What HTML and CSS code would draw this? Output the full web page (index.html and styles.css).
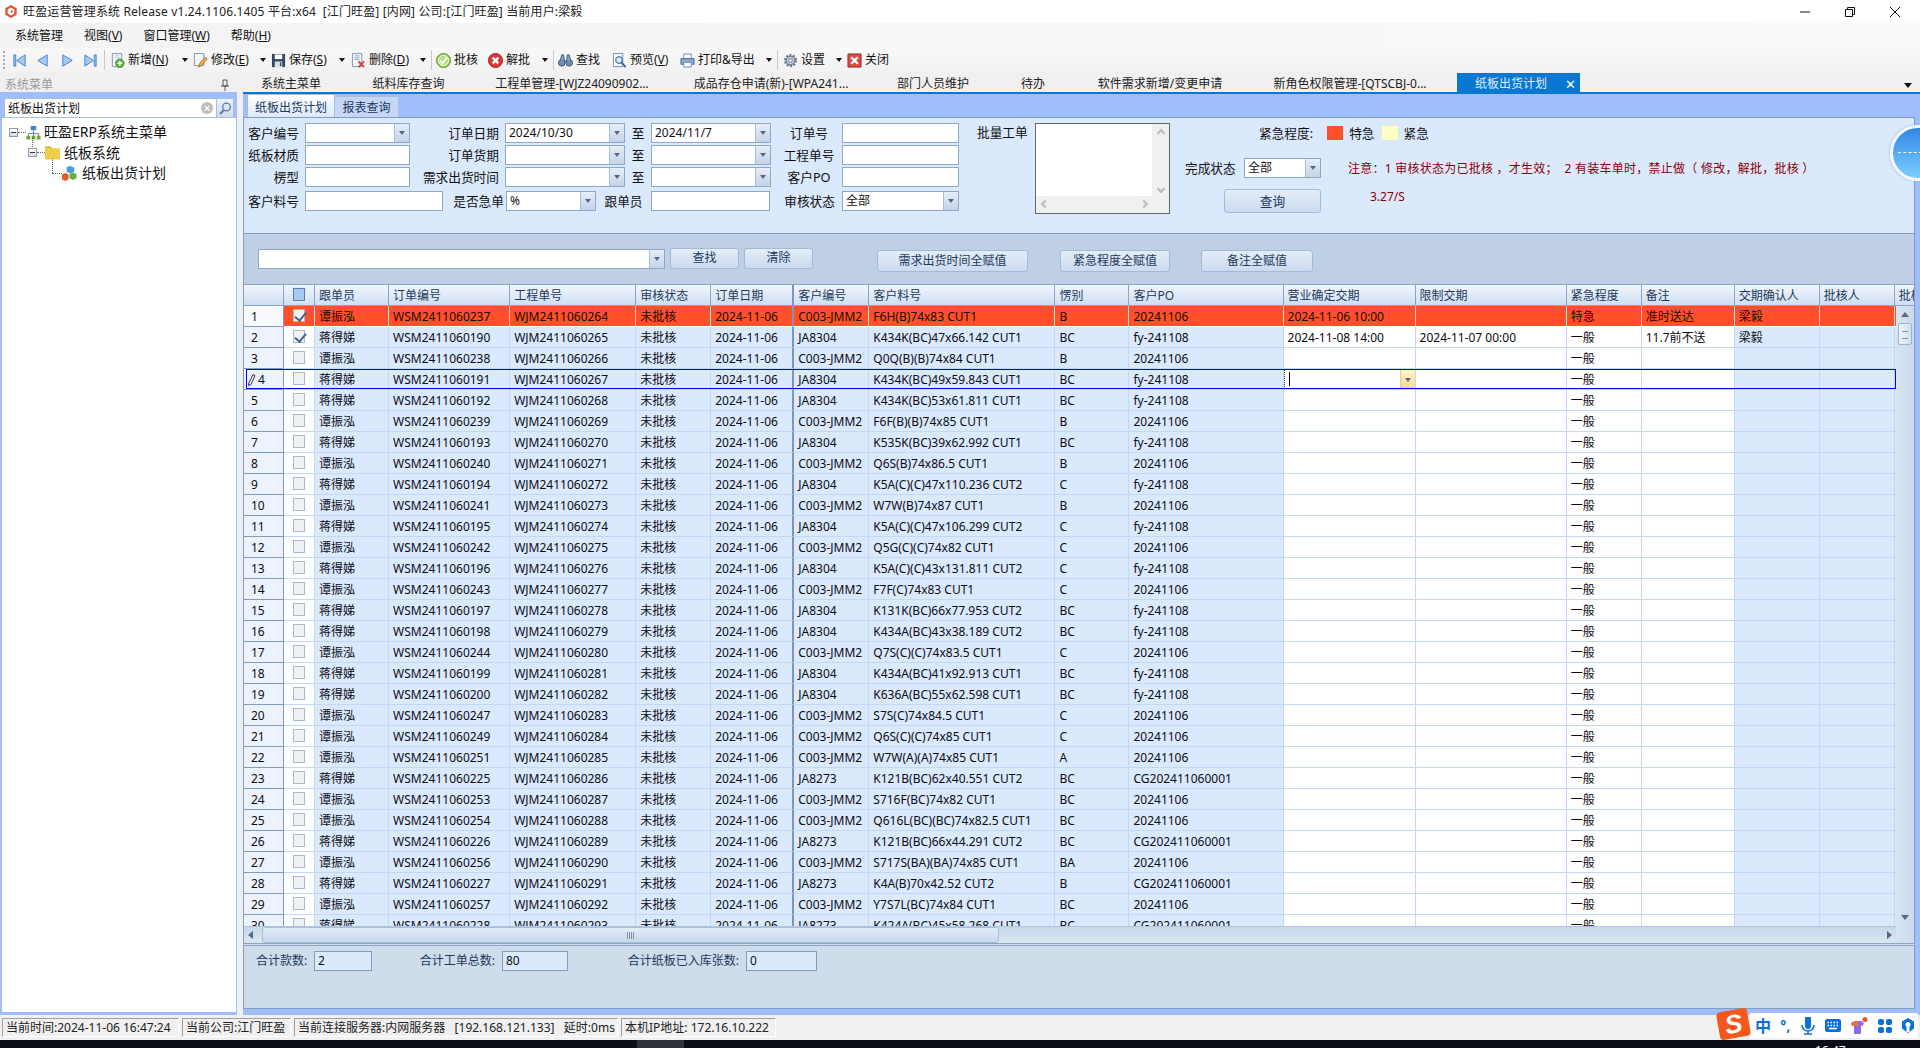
FILE: index.html
```html
<!DOCTYPE html>
<html lang="zh-CN">
<head>
  <meta charset="UTF-8" />
  <title>旺盈运营管理系统</title>
  <link rel="stylesheet" href="styles.css">
</head>
<body>
  <!-- Icon sprite -->
  <svg class="sprite" xmlns="http://www.w3.org/2000/svg">
    <symbol id="i-first" viewBox="0 0 16 16"><path d="M2 2h2v12H2zM14 2v12L5 8z" fill="#a9c8f2" stroke="#3d7fd2"/></symbol>
    <symbol id="i-prev" viewBox="0 0 16 16"><path d="M13 2v12L3 8z" fill="#a9c8f2" stroke="#3d7fd2"/></symbol>
    <symbol id="i-next" viewBox="0 0 16 16"><path d="M3 2v12l10-6z" fill="#a9c8f2" stroke="#3d7fd2"/></symbol>
    <symbol id="i-last" viewBox="0 0 16 16"><path d="M12 2h2v12h-2zM2 2v12l9-6z" fill="#a9c8f2" stroke="#3d7fd2"/></symbol>
    <symbol id="i-add" viewBox="0 0 16 16"><path d="M2.500.5h10v14h-10z" fill="#f4f7fb" stroke="#7b93b3"/><path d="M5 3h5M5 5h5" stroke="#b7c6da"/><circle cx="10.500" cy="11" r="4.500" fill="#63b548" stroke="#3c8a2c"/><path d="M8 11h5M10.500 8.500v5" stroke="#fff" stroke-width="1.500"/></symbol>
    <symbol id="i-edit" viewBox="0 0 16 16"><path d="M1.500.5h10v13h-10z" fill="#f4f7fb" stroke="#7b93b3"/><path d="M6 15l1-3.500 6-7 2 2-6 7z" fill="#efb13f" stroke="#a46f14"/></symbol>
    <symbol id="i-save" viewBox="0 0 16 16"><path d="M1 1h14v14H1z" fill="#33475f"/><path d="M4 1.500h8v5H4z" fill="#fff"/><path d="M4 9h8v6H4z" fill="#d9e1ea"/><path d="M9.500 10h1.500v4H9.500z" fill="#33475f"/></symbol>
    <symbol id="i-del" viewBox="0 0 16 16"><path d="M1.500.5h10v14h-10z" fill="#f4f7fb" stroke="#7b93b3"/><path d="M4 3h5M4 5h5M4 7h5" stroke="#8ea3bf"/><path d="M8 9l6 6M14 9l-6 6" stroke="#d8413c" stroke-width="2"/></symbol>
    <symbol id="i-ok" viewBox="0 0 16 16"><circle cx="8" cy="8" r="7.500" fill="#8fc850" stroke="#5f9a2c"/><circle cx="8" cy="8" r="5.500" fill="#b8dd85" stroke="#fff"/><path d="M4.500 8l2.500 3 4.500-6" fill="none" stroke="#fff" stroke-width="2"/></symbol>
    <symbol id="i-no" viewBox="0 0 16 16"><circle cx="8" cy="8" r="7.500" fill="#d63a37" stroke="#a91f1e"/><path d="M5 5l6 6M11 5l-6 6" stroke="#fff" stroke-width="2.500"/></symbol>
    <symbol id="i-find" viewBox="0 0 16 16"><circle cx="4" cy="10.500" r="3.500" fill="#6f8eb3" stroke="#3c5576"/><circle cx="12" cy="10.500" r="3.500" fill="#6f8eb3" stroke="#3c5576"/><path d="M2.500 8l1.500-6h2l1 7h2l1-7h2l1.500 6" fill="#8ea6c4" stroke="#3c5576"/></symbol>
    <symbol id="i-view" viewBox="0 0 16 16"><path d="M1.500.5h10v14h-10z" fill="#f4f7fb" stroke="#6e8fb8"/><circle cx="7.500" cy="7.500" r="3.500" fill="#d7e7fa" stroke="#36699f" stroke-width="1.200"/><path d="M10 10l4.500 5" stroke="#36699f" stroke-width="2"/></symbol>
    <symbol id="i-print" viewBox="0 0 16 16"><path d="M4 1h8v5H4z" fill="#fff" stroke="#6e8fb8"/><path d="M1 6h14v6H1z" fill="#8ea8c8" stroke="#4e6c92"/><path d="M4 10h8v5H4z" fill="#fff" stroke="#6e8fb8"/></symbol>
    <symbol id="i-gear" viewBox="0 0 16 16"><circle cx="8" cy="8" r="5.500" fill="#a9b4c2" stroke="#6b7889" stroke-width="3" stroke-dasharray="2 1.450"/><circle cx="8" cy="8" r="4.500" fill="#c3ccd7" stroke="#6b7889"/><circle cx="8" cy="8" r="2" fill="#f0f0f0" stroke="#6b7889"/></symbol>
    <symbol id="i-close" viewBox="0 0 16 16"><path d="M1 1h14v14H1z" fill="#d64a48" stroke="#a32524"/><path d="M4.500 4.500l7 7M11.500 4.500l-7 7" stroke="#fff" stroke-width="2.500"/></symbol>
    <symbol id="i-logo" viewBox="0 0 16 16"><path d="M8 .5l6.500 3.700v7.600L8 15.500l-6.500-3.700V4.200z" fill="#e0532f"/><path d="M8 3.500l3.800 2.200v4.600L8 12.500l-3.800-2.200V5.700z" fill="#fff"/><path d="M8 6l2 1.200v1.600L8 10z" fill="#e0532f"/></symbol>
    <symbol id="i-net" viewBox="0 0 16 16"><path d="M8 5v4M2.500 12V9h11v3M8 9v3" fill="none" stroke="#5f7fa0"/><path d="M5 1h6v4.500H5z" fill="#4c86c8"/><path d="M.5 11.500h4v4h-4zM6 11.500h4v4H6zM11.500 11.500h4v4h-4z" fill="#79a33c"/></symbol>
    <symbol id="i-folder" viewBox="0 0 16 16"><path d="M0 1.500h6l1.500 2H16v12H0z" fill="#f0cd4d"/><path d="M0 1.500h6l1.500 2H0z" fill="#e3b93a"/></symbol>
    <symbol id="i-cubes" viewBox="0 0 16 16"><path d="M5 1l4-1 4 1.500v5L9 8 5 6.500z" fill="#4a9fd8"/><path d="M0 9l3.500-1.500L7 9v5l-3.500 2L0 14z" fill="#e35a2c"/><path d="M8 8.500l3.500-1.500L15.500 8.500v4.500L11.500 15 8 13z" fill="#62b33f"/></symbol>
  </svg>

  <!-- Window title -->
  <header class="titlebar">
    <svg class="logo"><use href="#i-logo"/></svg>
    <span class="title-text">旺盈运营管理系统 Release v1.24.1106.1405 平台:x64  [江门旺盈] [内网] 公司:[江门旺盈] 当前用户:梁毅</span>
    <div class="win-buttons">
      <svg width="12" height="12" viewBox="0 0 12 12"><path d="M1 6h10" stroke="#111"/></svg>
      <svg width="12" height="12" viewBox="0 0 12 12"><path d="M1.500 3.500h7v7h-7zM3.500 3.500v-2h7v7h-2" fill="none" stroke="#111"/></svg>
      <svg width="12" height="12" viewBox="0 0 12 12"><path d="M1 1l10 10M11 1L1 11" stroke="#111"/></svg>
    </div>
  </header>

  <nav class="menubar">
    <span>系统管理</span>
    <span>视图(<u>V</u>)</span>
    <span>窗口管理(<u>W</u>)</span>
    <span>帮助(<u>H</u>)</span>
  </nav>

  <div class="toolbar">
    <span class="tb"><svg class="ico"><use href="#i-first"/></svg></span>
    <span class="tb"><svg class="ico"><use href="#i-prev"/></svg></span>
    <span class="tb"><svg class="ico"><use href="#i-next"/></svg></span>
    <span class="tb"><svg class="ico"><use href="#i-last"/></svg></span>
    <span class="tb-sep"></span>
    <span class="tb"><svg class="ico"><use href="#i-add"/></svg><span>新增(<u>N</u>)</span></span>
    <span class="tb-arrow"></span>
    <span class="tb"><svg class="ico"><use href="#i-edit"/></svg><span>修改(<u>E</u>)</span></span>
    <span class="tb-arrow"></span>
    <span class="tb"><svg class="ico"><use href="#i-save"/></svg><span>保存(<u>S</u>)</span></span>
    <span class="tb-arrow"></span>
    <span class="tb"><svg class="ico"><use href="#i-del"/></svg><span>删除(<u>D</u>)</span></span>
    <span class="tb-arrow"></span>
    <span class="tb-sep"></span>
    <span class="tb"><svg class="ico"><use href="#i-ok"/></svg><span>批核</span></span>
    <span class="tb"><svg class="ico"><use href="#i-no"/></svg><span>解批</span></span>
    <span class="tb-arrow"></span>
    <span class="tb-sep"></span>
    <span class="tb"><svg class="ico"><use href="#i-find"/></svg><span>查找</span></span>
    <span class="tb"><svg class="ico"><use href="#i-view"/></svg><span>预览(<u>V</u>)</span></span>
    <span class="tb"><svg class="ico"><use href="#i-print"/></svg><span>打印&amp;导出</span></span>
    <span class="tb-arrow"></span>
    <span class="tb-sep"></span>
    <span class="tb"><svg class="ico"><use href="#i-gear"/></svg><span>设置</span></span>
    <span class="tb-arrow"></span>
    <span class="tb"><svg class="ico"><use href="#i-close"/></svg><span>关闭</span></span>
  </div>

  <div class="workspace">
    <!-- Left menu panel -->
    <aside class="sidebar">
      <div class="side-head">
        <span class="side-title">系统菜单</span>
        <span class="side-dots"></span>
        <svg class="side-pin" width="10" height="12" viewBox="0 0 10 12"><path d="M3 1h4v6H3zM1 7h8M5 7v5" fill="none" stroke="#555"/></svg>
      </div>
      <div class="side-body">
        <div class="side-search">
          <span class="side-input">纸板出货计划</span>
          <span class="side-clear">×</span>
          <span class="side-go"><svg width="13" height="13" viewBox="0 0 13 13"><circle cx="7.500" cy="5" r="3.800" fill="none" stroke="#5d7ca3" stroke-width="1.300"/><path d="M5 8l-4 4" stroke="#5d7ca3" stroke-width="2"/></svg></span>
        </div>
        <div class="tree">
          <div class="node lvl0"><i class="exp"></i><i class="dots"></i><svg class="ico"><use href="#i-net"/></svg><span>旺盈ERP系统主菜单</span></div>
          <div class="node lvl1"><i class="exp"></i><i class="dots"></i><svg class="ico"><use href="#i-folder"/></svg><span>纸板系统</span></div>
          <div class="node lvl2"><i class="dots"></i><svg class="ico"><use href="#i-cubes"/></svg><span>纸板出货计划</span></div>
        </div>
      </div>
    </aside>

    <main class="main">
      <!-- Document tabs -->
      <div class="doc-tabs">
        <span class="doc-tab">系统主菜单</span>
        <span class="doc-tab">纸料库存查询</span>
        <span class="doc-tab">工程单管理-[WJZ24090902...</span>
        <span class="doc-tab">成品存仓申请(新)-[WPA241...</span>
        <span class="doc-tab">部门人员维护</span>
        <span class="doc-tab">待办</span>
        <span class="doc-tab">软件需求新增/变更申请</span>
        <span class="doc-tab">新角色权限管理-[QTSCBJ-0...</span>
        <span class="doc-tab gap"></span>
        <span class="doc-tab active">纸板出货计划<b>✕</b></span>
        <span class="doc-tab more"><i></i></span>
      </div>

      <div class="sub-tabs">
        <span class="sub-tab active">纸板出货计划</span>
        <span class="sub-tab">报表查询</span>
      </div>

      <!-- Query form -->
      <section class="form">
        <div class="form-left">
          <div class="form-grid">
            <label>客户编号</label><span class="combo"><em></em><i></i></span>
            <label>订单日期</label><span class="combo"><em>2024/10/30</em><i></i></span>
            <label class="to">至</label><span class="combo"><em>2024/11/7</em><i></i></span>
            <label class="mid">订单号</label><span class="text-in"></span>

            <label>纸板材质</label><span class="text-in"></span>
            <label>订单货期</label><span class="combo"><em></em><i></i></span>
            <label class="to">至</label><span class="combo"><em></em><i></i></span>
            <label class="mid">工程单号</label><span class="text-in"></span>

            <label>楞型</label><span class="text-in"></span>
            <label>需求出货时间</label><span class="combo"><em></em><i></i></span>
            <label class="to">至</label><span class="combo"><em></em><i></i></span>
            <label class="mid">客户PO</label><span class="text-in"></span>
          </div>
          <div class="form-row4">
            <label>客户料号</label><span class="text-in"></span>
            <label class="tight">是否急单</label><span class="combo"><em>%</em><i></i></span>
            <label class="mid">跟单员</label><span class="text-in"></span>
            <label class="far">审核状态</label><span class="combo"><em>全部</em><i></i></span>
          </div>
        </div>

        <div class="batch">
          <label>批量工单</label>
          <div class="batch-box">
            <div class="batch-text"></div>
            <div class="batch-v"><i class="chev up"></i><i class="chev down"></i></div>
            <div class="batch-h"><i class="chev left"></i><i class="chev right"></i></div>
          </div>
        </div>

        <div class="form-right">
          <div class="legend">
            <span>紧急程度:</span>
            <i class="swatch red"></i><span>特急</span>
            <i class="swatch yellow"></i><span>紧急</span>
          </div>
          <div class="state-row">
            <label>完成状态</label>
            <span class="combo state"><em>全部</em><i></i></span>
            <span class="note">注意：1 审核状态为已批核 ，才生效；  2 有装车单时，禁止做（ 修改，解批，批核 ）</span>
          </div>
          <div class="query-row">
            <button class="btn query">查询</button>
            <span class="note">3.27/S</span>
          </div>
        </div>
      </section>

      <!-- Grid search bar -->
      <section class="filter-bar">
        <span class="combo search"><em></em><i></i></span>
        <button class="btn small">查找</button>
        <button class="btn small">清除</button>
        <button class="btn assign a1">需求出货时间全赋值</button>
        <button class="btn assign a2">紧急程度全赋值</button>
        <button class="btn assign a3">备注全赋值</button>
      </section>

      <section class="grid-wrap">
        <div class="grid-clip">
          <table class="grid">
            <colgroup>
              <col class="c40"><col class="c31"><col class="c74"><col class="c121"><col class="c126"><col class="c75"><col class="c83"><col class="c75"><col class="c186"><col class="c74"><col class="c154"><col class="c132"><col class="c151"><col class="c75"><col class="c93"><col class="c85"><col class="c75"><col class="c21">
            </colgroup>
            <thead>
              <tr><th></th><th><i class="chk head"></i></th><th>跟单员</th><th>订单编号</th><th>工程单号</th><th>审核状态</th><th>订单日期</th><th>客户编号</th><th>客户料号</th><th>愣别</th><th>客户PO</th><th>营业确定交期</th><th>限制交期</th><th>紧急程度</th><th>备注</th><th>交期确认人</th><th>批核人</th><th>批核时间</th></tr>
            </thead>
            <tbody>
              <tr class="urgent"><td>1</td><td><i class="chk on"></i></td><td>谭振泓</td><td>WSM2411060237</td><td>WJM2411060264</td><td>未批核</td><td>2024-11-06</td><td>C003-JMM2</td><td>F6H(B)74x83 CUT1</td><td>B</td><td>20241106</td><td>2024-11-06 10:00</td><td></td><td>特急</td><td>准时送达</td><td>梁毅</td><td></td><td></td></tr>
              <tr><td>2</td><td><i class="chk on"></i></td><td>蒋得娣</td><td>WSM2411060190</td><td>WJM2411060265</td><td>未批核</td><td>2024-11-06</td><td>JA8304</td><td>K434K(BC)47x66.142 CUT1</td><td>BC</td><td>fy-241108</td><td>2024-11-08 14:00</td><td>2024-11-07 00:00</td><td>一般</td><td>11.7前不送</td><td>梁毅</td><td></td><td></td></tr>
              <tr><td>3</td><td><i class="chk"></i></td><td>谭振泓</td><td>WSM2411060238</td><td>WJM2411060266</td><td>未批核</td><td>2024-11-06</td><td>C003-JMM2</td><td>Q0Q(B)(B)74x84 CUT1</td><td>B</td><td>20241106</td><td></td><td></td><td>一般</td><td></td><td></td><td></td><td></td></tr>
              <tr><td class="editing"><svg width="8" height="12" viewBox="0 0 8 12"><path d="M5 .5l2 1-4 9-2.500 1 .3-2.500z" fill="none" stroke="#333"/></svg>4</td><td><i class="chk"></i></td><td>蒋得娣</td><td>WSM2411060191</td><td>WJM2411060267</td><td>未批核</td><td>2024-11-06</td><td>JA8304</td><td>K434K(BC)49x59.843 CUT1</td><td>BC</td><td>fy-241108</td><td class="edit-cell"><div><span class="caret"></span><span class="cell-drop"><i></i></span></div></td><td></td><td>一般</td><td></td><td></td><td></td><td></td></tr>
              <tr><td>5</td><td><i class="chk"></i></td><td>蒋得娣</td><td>WSM2411060192</td><td>WJM2411060268</td><td>未批核</td><td>2024-11-06</td><td>JA8304</td><td>K434K(BC)53x61.811 CUT1</td><td>BC</td><td>fy-241108</td><td></td><td></td><td>一般</td><td></td><td></td><td></td><td></td></tr>
              <tr><td>6</td><td><i class="chk"></i></td><td>谭振泓</td><td>WSM2411060239</td><td>WJM2411060269</td><td>未批核</td><td>2024-11-06</td><td>C003-JMM2</td><td>F6F(B)(B)74x85 CUT1</td><td>B</td><td>20241106</td><td></td><td></td><td>一般</td><td></td><td></td><td></td><td></td></tr>
              <tr><td>7</td><td><i class="chk"></i></td><td>蒋得娣</td><td>WSM2411060193</td><td>WJM2411060270</td><td>未批核</td><td>2024-11-06</td><td>JA8304</td><td>K535K(BC)39x62.992 CUT1</td><td>BC</td><td>fy-241108</td><td></td><td></td><td>一般</td><td></td><td></td><td></td><td></td></tr>
              <tr><td>8</td><td><i class="chk"></i></td><td>谭振泓</td><td>WSM2411060240</td><td>WJM2411060271</td><td>未批核</td><td>2024-11-06</td><td>C003-JMM2</td><td>Q6S(B)74x86.5 CUT1</td><td>B</td><td>20241106</td><td></td><td></td><td>一般</td><td></td><td></td><td></td><td></td></tr>
              <tr><td>9</td><td><i class="chk"></i></td><td>蒋得娣</td><td>WSM2411060194</td><td>WJM2411060272</td><td>未批核</td><td>2024-11-06</td><td>JA8304</td><td>K5A(C)(C)47x110.236 CUT2</td><td>C</td><td>fy-241108</td><td></td><td></td><td>一般</td><td></td><td></td><td></td><td></td></tr>
              <tr><td>10</td><td><i class="chk"></i></td><td>谭振泓</td><td>WSM2411060241</td><td>WJM2411060273</td><td>未批核</td><td>2024-11-06</td><td>C003-JMM2</td><td>W7W(B)74x87 CUT1</td><td>B</td><td>20241106</td><td></td><td></td><td>一般</td><td></td><td></td><td></td><td></td></tr>
              <tr><td>11</td><td><i class="chk"></i></td><td>蒋得娣</td><td>WSM2411060195</td><td>WJM2411060274</td><td>未批核</td><td>2024-11-06</td><td>JA8304</td><td>K5A(C)(C)47x106.299 CUT2</td><td>C</td><td>fy-241108</td><td></td><td></td><td>一般</td><td></td><td></td><td></td><td></td></tr>
              <tr><td>12</td><td><i class="chk"></i></td><td>谭振泓</td><td>WSM2411060242</td><td>WJM2411060275</td><td>未批核</td><td>2024-11-06</td><td>C003-JMM2</td><td>Q5G(C)(C)74x82 CUT1</td><td>C</td><td>20241106</td><td></td><td></td><td>一般</td><td></td><td></td><td></td><td></td></tr>
              <tr><td>13</td><td><i class="chk"></i></td><td>蒋得娣</td><td>WSM2411060196</td><td>WJM2411060276</td><td>未批核</td><td>2024-11-06</td><td>JA8304</td><td>K5A(C)(C)43x131.811 CUT2</td><td>C</td><td>fy-241108</td><td></td><td></td><td>一般</td><td></td><td></td><td></td><td></td></tr>
              <tr><td>14</td><td><i class="chk"></i></td><td>谭振泓</td><td>WSM2411060243</td><td>WJM2411060277</td><td>未批核</td><td>2024-11-06</td><td>C003-JMM2</td><td>F7F(C)74x83 CUT1</td><td>C</td><td>20241106</td><td></td><td></td><td>一般</td><td></td><td></td><td></td><td></td></tr>
              <tr><td>15</td><td><i class="chk"></i></td><td>蒋得娣</td><td>WSM2411060197</td><td>WJM2411060278</td><td>未批核</td><td>2024-11-06</td><td>JA8304</td><td>K131K(BC)66x77.953 CUT2</td><td>BC</td><td>fy-241108</td><td></td><td></td><td>一般</td><td></td><td></td><td></td><td></td></tr>
              <tr><td>16</td><td><i class="chk"></i></td><td>蒋得娣</td><td>WSM2411060198</td><td>WJM2411060279</td><td>未批核</td><td>2024-11-06</td><td>JA8304</td><td>K434A(BC)43x38.189 CUT2</td><td>BC</td><td>fy-241108</td><td></td><td></td><td>一般</td><td></td><td></td><td></td><td></td></tr>
              <tr><td>17</td><td><i class="chk"></i></td><td>谭振泓</td><td>WSM2411060244</td><td>WJM2411060280</td><td>未批核</td><td>2024-11-06</td><td>C003-JMM2</td><td>Q7S(C)(C)74x83.5 CUT1</td><td>C</td><td>20241106</td><td></td><td></td><td>一般</td><td></td><td></td><td></td><td></td></tr>
              <tr><td>18</td><td><i class="chk"></i></td><td>蒋得娣</td><td>WSM2411060199</td><td>WJM2411060281</td><td>未批核</td><td>2024-11-06</td><td>JA8304</td><td>K434A(BC)41x92.913 CUT1</td><td>BC</td><td>fy-241108</td><td></td><td></td><td>一般</td><td></td><td></td><td></td><td></td></tr>
              <tr><td>19</td><td><i class="chk"></i></td><td>蒋得娣</td><td>WSM2411060200</td><td>WJM2411060282</td><td>未批核</td><td>2024-11-06</td><td>JA8304</td><td>K636A(BC)55x62.598 CUT1</td><td>BC</td><td>fy-241108</td><td></td><td></td><td>一般</td><td></td><td></td><td></td><td></td></tr>
              <tr><td>20</td><td><i class="chk"></i></td><td>谭振泓</td><td>WSM2411060247</td><td>WJM2411060283</td><td>未批核</td><td>2024-11-06</td><td>C003-JMM2</td><td>S7S(C)74x84.5 CUT1</td><td>C</td><td>20241106</td><td></td><td></td><td>一般</td><td></td><td></td><td></td><td></td></tr>
              <tr><td>21</td><td><i class="chk"></i></td><td>谭振泓</td><td>WSM2411060249</td><td>WJM2411060284</td><td>未批核</td><td>2024-11-06</td><td>C003-JMM2</td><td>Q6S(C)(C)74x85 CUT1</td><td>C</td><td>20241106</td><td></td><td></td><td>一般</td><td></td><td></td><td></td><td></td></tr>
              <tr><td>22</td><td><i class="chk"></i></td><td>谭振泓</td><td>WSM2411060251</td><td>WJM2411060285</td><td>未批核</td><td>2024-11-06</td><td>C003-JMM2</td><td>W7W(A)(A)74x85 CUT1</td><td>A</td><td>20241106</td><td></td><td></td><td>一般</td><td></td><td></td><td></td><td></td></tr>
              <tr><td>23</td><td><i class="chk"></i></td><td>蒋得娣</td><td>WSM2411060225</td><td>WJM2411060286</td><td>未批核</td><td>2024-11-06</td><td>JA8273</td><td>K121B(BC)62x40.551 CUT2</td><td>BC</td><td>CG202411060001</td><td></td><td></td><td>一般</td><td></td><td></td><td></td><td></td></tr>
              <tr><td>24</td><td><i class="chk"></i></td><td>谭振泓</td><td>WSM2411060253</td><td>WJM2411060287</td><td>未批核</td><td>2024-11-06</td><td>C003-JMM2</td><td>S716F(BC)74x82 CUT1</td><td>BC</td><td>20241106</td><td></td><td></td><td>一般</td><td></td><td></td><td></td><td></td></tr>
              <tr><td>25</td><td><i class="chk"></i></td><td>谭振泓</td><td>WSM2411060254</td><td>WJM2411060288</td><td>未批核</td><td>2024-11-06</td><td>C003-JMM2</td><td>Q616L(BC)(BC)74x82.5 CUT1</td><td>BC</td><td>20241106</td><td></td><td></td><td>一般</td><td></td><td></td><td></td><td></td></tr>
              <tr><td>26</td><td><i class="chk"></i></td><td>蒋得娣</td><td>WSM2411060226</td><td>WJM2411060289</td><td>未批核</td><td>2024-11-06</td><td>JA8273</td><td>K121B(BC)66x44.291 CUT2</td><td>BC</td><td>CG202411060001</td><td></td><td></td><td>一般</td><td></td><td></td><td></td><td></td></tr>
              <tr><td>27</td><td><i class="chk"></i></td><td>谭振泓</td><td>WSM2411060256</td><td>WJM2411060290</td><td>未批核</td><td>2024-11-06</td><td>C003-JMM2</td><td>S717S(BA)(BA)74x85 CUT1</td><td>BA</td><td>20241106</td><td></td><td></td><td>一般</td><td></td><td></td><td></td><td></td></tr>
              <tr><td>28</td><td><i class="chk"></i></td><td>蒋得娣</td><td>WSM2411060227</td><td>WJM2411060291</td><td>未批核</td><td>2024-11-06</td><td>JA8273</td><td>K4A(B)70x42.52 CUT2</td><td>B</td><td>CG202411060001</td><td></td><td></td><td>一般</td><td></td><td></td><td></td><td></td></tr>
              <tr><td>29</td><td><i class="chk"></i></td><td>谭振泓</td><td>WSM2411060257</td><td>WJM2411060292</td><td>未批核</td><td>2024-11-06</td><td>C003-JMM2</td><td>Y7S7L(BC)74x84 CUT1</td><td>BC</td><td>20241106</td><td></td><td></td><td>一般</td><td></td><td></td><td></td><td></td></tr>
              <tr><td>30</td><td><i class="chk"></i></td><td>蒋得娣</td><td>WSM2411060228</td><td>WJM2411060293</td><td>未批核</td><td>2024-11-06</td><td>JA8273</td><td>K424A(BC)45x58.268 CUT1</td><td>BC</td><td>CG202411060001</td><td></td><td></td><td>一般</td><td></td><td></td><td></td><td></td></tr>
            </tbody>
          </table>
        </div>
        <div class="focus-row"></div>
        <div class="vscroll"><i class="arrow up"></i><span class="v-thumb"></span><i class="arrow down"></i></div>
        <div class="hscroll"><i class="arrow left"></i><span class="h-thumb"></span><i class="arrow right"></i></div>
      </section>

      <!-- Totals -->
      <section class="summary">
        <label>合计款数:</label><span class="sum-in">2</span>
        <label>合计工单总数:</label><span class="sum-in">80</span>
        <label>合计纸板已入库张数:</label><span class="sum-in">0</span>
      </section>
    </main>
  </div>

  <footer class="statusbar">
    <span class="stat s1">当前时间:2024-11-06 16:47:24</span>
    <span class="stat s2">当前公司:江门旺盈</span>
    <span class="stat s3">当前连接服务器:内网服务器   [192.168.121.133]   延时:0ms</span>
    <span class="stat s4">本机IP地址: 172.16.10.222</span>
  </footer>

  <div class="taskbar"><span class="task-on"></span><span class="clock">16:47</span></div>

  <!-- Floating widgets -->
  <div class="float-ball"></div>
  <div class="ime">
    <span class="ime-logo"><b>S</b></span>
    <span class="ime-zh">中</span>
    <span class="ime-zh punct">°,</span>
    <svg width="16" height="18" viewBox="0 0 16 18"><path d="M5 1.500a3 3 0 0 1 6 0V9a3 3 0 0 1-6 0z" fill="#0a6fd6"/><path d="M2 8a6 6 0 0 0 12 0M8 14v3M4 17h8" fill="none" stroke="#0a6fd6" stroke-width="1.500"/></svg>
    <svg width="16" height="14" viewBox="0 0 16 14"><rect width="16" height="13" rx="2" fill="#0a6fd6"/><path d="M2.500 3.500h1.500M5.500 3.500H7M8.500 3.500H10M11.500 3.500H13M2.500 6.500h1.500M5.500 6.500H7M8.500 6.500H10M11.500 6.500H13M4 9.500h8" stroke="#fff" stroke-width="1.500"/></svg>
    <svg width="18" height="18" viewBox="0 0 18 18"><path d="M1 6l4-2h6l3 2-1.500 3L11 8.500V17H4V8.500L2 9z" fill="#8a6be0"/><path d="M1 6l4-2h3v5H2z" fill="#ee6a50"/><circle cx="15" cy="2.500" r="2.500" fill="#f4512c"/></svg>
    <svg width="14" height="14" viewBox="0 0 14 14"><g fill="#0a6fd6"><rect width="6" height="6" rx="2"/><rect x="8" width="6" height="6" rx="2"/><rect y="8" width="6" height="6" rx="2"/><rect x="8" y="8" width="6" height="6" rx="2"/></g></svg>
    <svg width="14" height="15" viewBox="0 0 14 15"><path d="M7 0l6 3.500v7L7 15l-6-4.500v-7z" fill="#0a6fd6"/><circle cx="7" cy="6.500" r="2.500" fill="#fff"/><path d="M5.500 9h3v5h-3z" fill="#fff"/></svg>
  </div>
</body>
</html>
```

FILE: styles.css
```css
/* Global */
* {
  box-sizing: border-box;
}
html, body {
  margin: 0;
  height: 100%;
}
body {
  width: 1920px;
  height: 1048px;
  display: flex;
  flex-direction: column;
  overflow: hidden;
  position: relative;
  background: #f0f0f0;
  color: #111;
  font: 12px/16px "Noto Sans", "Noto Sans CJK SC", sans-serif;
}
.sprite {
  display: none;
}
.ico {
  width: 15px;
  height: 15px;
  flex: none;
}
label, em {
  font-style: normal;
}

/* Title bar */
.titlebar {
  height: 23px;
  flex: none;
  display: flex;
  align-items: center;
  padding-left: 4px;
  background: #fff;
}
.logo {
  width: 14px;
  height: 15px;
}
.title-text {
  margin-left: 5px;
  white-space: pre;
  letter-spacing: .15px;
  color: #222;
}
.win-buttons {
  margin-left: auto;
  display: flex;
  gap: 33px;
  padding-right: 19px;
}

/* Menu and toolbar */
.menubar {
  height: 25px;
  flex: none;
  display: flex;
  align-items: center;
  gap: 21px;
  padding-left: 15px;
  background: linear-gradient(90deg, #f3f3f3, #fafafa);
}
.toolbar {
  height: 24px;
  flex: none;
  display: grid;
  grid-template-columns: 23px 25px 23px 21px 6px 70px 13px 65px 13px 66px 14px 67px 13px 5px 52px 52px 13px 5px 54px 68px 84px 13px 6px 51px 13px auto;
  align-items: center;
  padding-left: 12px;
  background: linear-gradient(#f8f8f8, #f2f2f2);
  position: relative;
}
.toolbar::before {
  content: "";
  position: absolute;
  left: 3px;
  top: 3px;
  bottom: 3px;
  border-left: 2px dotted #aaa;
}
.tb {
  display: flex;
  align-items: center;
  gap: 3px;
  white-space: nowrap;
}
.tb-sep {
  height: 20px;
  width: 1px;
  background: #c8c8c8;
}
.tb-arrow {
  width: 0;
  height: 0;
  margin-left: 2px;
  border: 3px solid transparent;
  border-top: 4px solid #111;
  border-bottom: 0;
}

/* Workspace */
.workspace {
  height: 943px;
  flex: none;
  display: flex;
  background: #f0f0f0;
}
.sidebar {
  width: 237px;
  flex: none;
  display: flex;
  flex-direction: column;
}
.side-head {
  height: 20px;
  flex: none;
  display: flex;
  align-items: center;
  padding: 5px 6px 0 5px;
}
.side-title {
  color: #999;
}
.side-dots {
  width: 142px;
  height: 6px;
  margin-left: 4px;
  background: radial-gradient(#bbb 35%, transparent 40%) 0 0 / 2px 2px;
}
.side-pin {
  margin-left: auto;
  margin-right: 1px;
}
.side-body {
  flex: 1;
  display: flex;
  flex-direction: column;
  padding: 6px 1px 3px 2px;
  background: #a0bdfd;
}
.side-search {
  height: 20px;
  margin: 0 2px;
  display: flex;
  align-items: center;
  background: #fff;
  border: 1px solid #a9bedb;
}
.side-input {
  flex: 1;
  padding: 2px 0 0 3px;
}
.side-clear {
  width: 12px;
  height: 12px;
  margin-right: 3px;
  border-radius: 50%;
  background: #bcbcbc;
  color: #fff;
  font: bold 11px/12px "Liberation Sans", sans-serif;
  text-align: center;
}
.side-go {
  width: 17px;
  height: 18px;
  display: flex;
  align-items: center;
  justify-content: center;
  background: linear-gradient(#eaf1fb, #cfdcee);
  border-left: 1px solid #a9bedb;
}
.tree {
  flex: 1;
  background: #fff;
  padding-top: 4px;
  font-size: 14px;
}
.node {
  height: 20.500px;
  display: flex;
  align-items: center;
  position: relative;
  white-space: nowrap;
}
.node span {
  margin-left: 4px;
}
.lvl0 { padding-left: 7px; }
.lvl1 { padding-left: 26px; }
.lvl2 { padding-left: 50px; }
.lvl0 span { margin-left: 3px; }
.lvl1 span { margin-left: 4px; }
.lvl2 span { margin-left: 5px; }
.exp {
  width: 9px;
  height: 9px;
  flex: none;
  border: 1px solid #8f9bac;
  background: linear-gradient(#fff, #d5dbe3) ;
  position: relative;
}
.exp::after {
  content: "";
  position: absolute;
  left: 1px;
  right: 1px;
  top: 3px;
  border-top: 1px solid #333;
}
.dots {
  width: 8px;
  margin-right: 0;
  flex: none;
  border-top: 1px dotted #666;
}
.lvl1::before {
  content: "";
  position: absolute;
  left: 30px;
  top: -6px;
  height: 10px;
  border-left: 1px dotted #666;
}
.lvl2 .dots {
  width: 10px;
}
.lvl2::before {
  content: "";
  position: absolute;
  left: 50px;
  top: -5px;
  height: 15px;
  border-left: 1px dotted #666;
}

/* Main column */
.main {
  flex: 1;
  margin-left: 6px;
  min-width: 0;
  display: flex;
  flex-direction: column;
  padding-right: 5px;
  background: #a0bdfd;
  position: relative;
}
.doc-tabs {
  height: 22px;
  flex: none;
  margin-right: -5px;
  display: grid;
  grid-template-columns: 104px 123px 204px 194px 130px 70px 184px 196px 9px 123px auto;
  align-items: stretch;
  background: #f0f0f0;
  border-bottom: 2px solid #0a78d0;
}
.doc-tab {
  display: flex;
  align-items: center;
  justify-content: center;
  padding-top: 3px;
  color: #222;
  white-space: nowrap;
}
.doc-tab:first-child {
  padding-right: 8px;
}
.doc-tab.active {
  margin-top: 1px;
  justify-content: flex-start;
  padding-left: 18px;
  gap: 18px;
  background: #0a78d0;
  color: #dfeeff;
}
.doc-tab.active b {
  font: 13px "DejaVu Sans", sans-serif;
  color: #fff;
}
.doc-tab.more {
  justify-content: flex-start;
}
.doc-tab.more i {
  width: 0;
  height: 0;
  margin-left: 324px;
  margin-top: 3px;
  border: 4px solid transparent;
  border-top: 5px solid #111;
  border-bottom: 0;
}
.sub-tabs {
  height: 23px;
  flex: none;
  display: flex;
  align-items: flex-end;
  padding-left: 4px;
}
.sub-tab {
  height: 21px;
  width: 64px;
  display: flex;
  align-items: center;
  justify-content: center;
  padding-top: 2px;
  background: #c4d7f4;
  color: #1e395b;
  border-top: 1px solid #a9bedb;
  border-right: 1px solid #a9bedb;
}
.sub-tab.active {
  height: 23px;
  width: 88px;
  padding-top: 3px;
  background: linear-gradient(#fff, #dbe9fd);
  border: 1px solid #a9bedb;
  border-bottom: 0;
}

/* Query form */
.form {
  height: 117px;
  flex: none;
  display: flex;
  padding: 5px 0 0 3px;
  background: #dbe9fd;
  border: 1px solid #7f9dc0;
  font-size: 12.700px;
}
.form label {
  white-space: nowrap;
}
.form-left {
  width: 712px;
  flex: none;
}
.form-grid {
  display: grid;
  grid-template-columns: 58px 105px 95px 120px 26px 120px 71px 117px;
  grid-auto-rows: 20px;
  row-gap: 2px;
  align-items: center;
}
.form-grid label,
.form-row4 label {
  text-align: right;
  padding-right: 6px;
}
.form-grid label.to {
  text-align: center;
  padding: 0;
}
.form-grid label.mid {
  text-align: center;
  padding: 0 0 0 5px;
}
.form-row4 {
  margin-top: 4px;
  display: grid;
  grid-template-columns: 58px 138px 63px 90px 55px 119px 72px 117px;
  grid-auto-rows: 20px;
  align-items: center;
}
.form-row4 label.tight {
  padding-right: 2px;
}
.form-row4 label.mid {
  text-align: center;
  padding: 0;
}
.form-row4 label.far {
  padding-right: 7px;
}
.text-in {
  height: 20px;
  display: block;
  background: #fff;
  border: 1px solid #8fa8c8;
}
.combo {
  height: 20px;
  display: flex;
  background: #fff;
  border: 1px solid #8fa8c8;
  font-size: 12px;
}
.combo em {
  flex: 1;
  padding-left: 3px;
  line-height: 18px;
  white-space: nowrap;
  overflow: hidden;
}
.combo i {
  width: 15px;
  position: relative;
  flex: none;
  background: linear-gradient(#e6eef9, #c4d3e7);
  border-left: 1px solid #a9bedb;
}
.combo i::after {
  content: "";
  position: absolute;
  left: 4px;
  top: 7px;
  border: 3px solid transparent;
  border-top: 4px solid #56688a;
  border-bottom: 0;
}

/* Batch box */
.batch {
  margin-left: 18px;
  width: 193px;
  flex: none;
  display: flex;
}
.batch label {
  width: 58px;
  flex: none;
  padding-top: 1px;
}
.batch-box {
  width: 136px;
  height: 91px;
  position: relative;
  background: #fff;
  border: 1px solid #666;
}
.batch-v {
  position: absolute;
  right: 0;
  top: 0;
  bottom: 0;
  width: 17px;
  background: #f0f0f0;
}
.batch-h {
  position: absolute;
  left: 0;
  right: 0;
  bottom: 0;
  height: 17px;
  background: #f0f0f0;
}
.chev {
  position: absolute;
  width: 6px;
  height: 6px;
  border-left: 2px solid #bbb;
  border-top: 2px solid #bbb;
}
.chev.up { top: 6px; right: 5px; transform: rotate(45deg); }
.chev.down { bottom: 21px; right: 5px; transform: rotate(225deg); }
.chev.left { left: 6px; top: 5px; transform: rotate(-45deg); }
.chev.right { right: 22px; top: 5px; transform: rotate(135deg); }

/* Right part of form */
.form-right {
  margin-left: 15px;
  flex: 1;
  min-width: 0;
}
.legend {
  height: 20px;
  display: flex;
  align-items: center;
  padding-left: 74px;
  white-space: nowrap;
}
.swatch {
  width: 16px;
  height: 14px;
  margin-left: 14px;
  margin-right: 6px;
}
.swatch.red {
  background: #ff5029;
}
.swatch.yellow {
  background: #ffffc4;
  margin-left: 7px;
}
.state-row {
  margin-top: 15px;
  height: 20px;
  display: flex;
  align-items: center;
}
.state-row label {
  width: 59px;
  flex: none;
}
.combo.state {
  width: 77px;
}
.note {
  color: #8b0000;
  font-size: 12px;
  white-space: pre;
}
.state-row .note {
  margin-left: 27px;
  padding-top: 2px;
  letter-spacing: .25px;
}
.query-row {
  margin-top: 11px;
  display: flex;
  align-items: flex-start;
}
.query-row .note {
  margin-left: 49px;
}
.btn {
  padding: 0;
  font: inherit;
  color: #1e395b;
  background: linear-gradient(#e4edf9, #cbdaee);
  border: 1px solid #a3bbd6;
  border-radius: 3px;
}
.btn.query {
  width: 97px;
  height: 24px;
  margin-left: 39px;
}

/* Grid filter bar */
.filter-bar {
  height: 50px;
  flex: none;
  display: flex;
  align-items: center;
  padding-left: 14px;
  gap: 5px;
  background: #bfd0e6;
  border-left: 1px solid #7f9dc0;
  border-right: 1px solid #7f9dc0;
}
.combo.search {
  width: 407px;
}
.btn.small {
  width: 69px;
  height: 21px;
  margin-top: -2px;
}
.btn.assign {
  height: 22px;
  margin-top: 4px;
}
.a1 { width: 151px; margin-left: 59px; }
.a2 { width: 110px; margin-left: 27px; }
.a3 { width: 112px; margin-left: 26px; }

/* Data grid */
.grid-wrap {
  height: 659px;
  flex: none;
  position: relative;
  background: #dbe9fd;
  border-left: 1px solid #7f9dc0;
  border-right: 1px solid #7f9dc0;
}
.grid-clip {
  height: 642px;
  overflow: hidden;
}
.grid {
  width: 1691px;
  table-layout: fixed;
  border-collapse: separate;
  border-spacing: 0;
}
.c21 { width: 40px; }
.c31 { width: 31px; }
.c40 { width: 40px; }
.c74 { width: 74px; }
.c75 { width: 75px; }
.c83 { width: 83px; }
.c85 { width: 85px; }
.c93 { width: 93px; }
.c121 { width: 121px; }
.c126 { width: 126px; }
.c132 { width: 132px; }
.c151 { width: 151px; }
.c154 { width: 154px; }
.c186 { width: 186px; }
.grid th {
  height: 22px;
  padding: 2px 4px 0;
  text-align: left;
  font-weight: normal;
  color: #1e395b;
  white-space: nowrap;
  overflow: hidden;
  background: linear-gradient(#f2f6fc, #cfdef2);
  border-top: 1px solid #8ba5c8;
  border-right: 1px solid #8ba5c8;
  border-bottom: 1px solid #8ba5c8;
}
.grid td {
  height: 21px;
  padding: 2px 4px 0;
  color: #0b0b14;
  white-space: nowrap;
  overflow: hidden;
  background: #dbe9fd;
  border-right: 1px solid #c3d8f6;
  border-bottom: 1px solid #c3d8f6;
}
.grid td:nth-child(1) {
  padding-left: 7px;
  background: #edf3fc;
  border-right-color: #7f9dc0;
  border-bottom-color: #7f9dc0;
}
.grid td:nth-child(2),
.grid td:nth-child(12),
.grid td:nth-child(13),
.grid td:nth-child(14),
.grid td:nth-child(15) {
  background: #fff;
}
.grid th:nth-child(7),
.grid td:nth-child(7) {
  border-right: 2px solid #7f96bb;
}
.grid th:nth-child(2),
.grid td:nth-child(2) {
  padding: 0;
  text-align: center;
}
.grid tr.urgent td {
  background: #ff5029;
  color: #1a0a00;
  border-right-color: #ffd8c8;
  border-bottom-color: #fff;
}
.grid tr.urgent td:nth-child(1) {
  background: #f7f9fd;
  border-right-color: #7f9dc0;
  border-bottom-color: #7f9dc0;
  color: #111;
}
.grid tr.urgent td:nth-child(7) {
  border-right-color: #7f96bb;
}
td.editing {
  padding-left: 4px !important;
}
td.editing svg {
  vertical-align: -2px;
  margin-right: 2px;
}
.grid td.edit-cell {
  padding: 0;
}
.edit-cell div {
  height: 19px;
  display: flex;
  align-items: center;
  justify-content: space-between;
  padding-left: 2px;
  border-left: 1px dotted #333;
}
.caret {
  width: 1px;
  height: 14px;
  margin-left: 2px;
  background: #000;
}
.cell-drop {
  width: 15px;
  height: 19px;
  position: relative;
  background: linear-gradient(#fdf4c8, #f7d88c);
  border-left: 1px solid #e3cf92;
}
.cell-drop i {
  position: absolute;
  left: 4px;
  top: 8px;
  border: 3px solid transparent;
  border-top: 4px solid #56688a;
  border-bottom: 0;
}
.chk {
  display: inline-block;
  width: 12px;
  height: 13px;
  vertical-align: -2px;
  background: #eef2f7;
  border: 1px solid #a9b9cc;
  position: relative;
}
.chk.head {
  background: #a9c8ee;
  border-color: #5e7faa;
  outline: 1px solid #dfe9f6;
}
.chk.on::after {
  content: "";
  position: absolute;
  left: 3px;
  top: 0;
  width: 5px;
  height: 9px;
  border-right: 2px solid #45628c;
  border-bottom: 2px solid #45628c;
  transform: rotate(40deg);
}
.focus-row {
  position: absolute;
  left: 2px;
  top: 85px;
  width: 1650px;
  height: 20px;
  border: 1px solid #0000ff;
  pointer-events: none;
}
.vscroll {
  position: absolute;
  right: 0;
  top: 22px;
  bottom: 0;
  width: 18px;
  background: linear-gradient(90deg, #d8e4f3, #cbdaec);
}
.v-thumb {
  position: absolute;
  left: 2px;
  top: 17px;
  width: 14px;
  height: 22px;
  border: 1px solid #9db4d1;
  border-radius: 2px;
  background: linear-gradient(90deg, #eef4fb, #d3e0f0);
}
.v-thumb::after {
  content: "";
  position: absolute;
  left: 3px;
  right: 3px;
  top: 7px;
  height: 6px;
  border-top: 1px solid #7f93ad;
  border-bottom: 1px solid #7f93ad;
}
.arrow {
  position: absolute;
  width: 0;
  height: 0;
  border: 4px solid transparent;
}
.arrow.up { top: 6px; left: 5px; border-bottom: 5px solid #56688a; border-top: 0; }
.arrow.down { top: 609px; left: 5px; border-top: 5px solid #56688a; border-bottom: 0; }
.hscroll {
  position: absolute;
  left: 0;
  right: 0;
  bottom: 0;
  height: 17px;
  margin-right: 18px;
  background: linear-gradient(#c8d8ea, #dbe7f0);
  border-top: 1px solid #b2c5dc;
}
.arrow.left { left: 4px; top: 4px; border-right: 5px solid #56688a; border-left: 0; }
.arrow.right { right: 4px; top: 4px; border-left: 5px solid #56688a; border-right: 0; }
.h-thumb {
  position: absolute;
  left: 18px;
  top: 0;
  width: 737px;
  height: 16px;
  border: 1px solid #a9bedb;
  border-radius: 3px;
  background: linear-gradient(#e3edf8, #c7d7ea);
}
.h-thumb::after {
  content: "";
  position: absolute;
  left: 364px;
  top: 4px;
  width: 7px;
  height: 7px;
  background: repeating-linear-gradient(90deg, #7f93ad 0 1px, transparent 1px 2px);
}

/* Totals */
.summary {
  height: 66px;
  flex: none;
  display: grid;
  grid-template-columns: 58px 58px 130px 66px 178px 71px;
  grid-auto-rows: 20px;
  align-items: center;
  padding: 5px 0 0 12px;
  background: #cfdcec;
  border: 1px solid #7f9dc0;
  border-top: 3px double #8ba5c8;
  color: #1e395b;
}
.summary label {
  text-align: right;
  padding-right: 7px;
  white-space: nowrap;
}
.sum-in {
  height: 20px;
  padding-left: 3px;
  background: #dbe9fd;
  border: 1px solid #7f9dc0;
  color: #111;
  line-height: 18px;
}

/* Status bar */
.statusbar {
  height: 25px;
  flex: none;
  display: flex;
  align-items: center;
  gap: 3px;
  padding-left: 2px;
  background: #f0f0f0;
}
.stat {
  height: 19px;
  padding-left: 3px;
  line-height: 18px;
  white-space: pre;
  overflow: hidden;
  color: #222;
  border: 1px solid;
  border-color: #a0a0a0 #fff #fff #a0a0a0;
}
.s1 { width: 177px; }
.s2 { width: 109px; }
.s3 { width: 324px; }
.s4 { width: 155px; }

/* Bottom OS strip */
.taskbar {
  height: 8px;
  flex: none;
  position: relative;
  overflow: hidden;
  background: #0b0e14;
}
.task-on {
  position: absolute;
  left: 637px;
  top: 0;
  width: 47px;
  height: 8px;
  background: #2e3238;
}
.clock {
  position: absolute;
  left: 1815px;
  top: 3px;
  color: #fff;
  font-size: 12px;
}

/* Floating widgets */
.float-ball {
  position: absolute;
  left: 1890px;
  top: 125px;
  width: 56px;
  height: 56px;
  border-radius: 50%;
  background: linear-gradient(#2f86e6, #7dcfff);
  border: 3px solid #f4faff;
  box-shadow: 0 0 3px #8fb0d8;
}
.float-ball::after {
  content: "";
  position: absolute;
  left: 5px;
  right: 0;
  top: 24px;
  border-top: 1px dashed #fff;
}
.ime {
  position: absolute;
  left: 1750px;
  top: 1013px;
  width: 168px;
  height: 25px;
  display: flex;
  align-items: center;
  justify-content: space-between;
  padding: 0 3px 0 5px;
  background: #fff;
  border-radius: 0 2px 2px 0;
}
.ime-logo {
  position: absolute;
  left: -32px;
  top: -3px;
  width: 31px;
  height: 28px;
  display: flex;
  align-items: center;
  justify-content: center;
  background: #f4581c;
  border-radius: 4px;
  transform: rotate(-10deg);
}
.ime-logo b {
  color: #fff;
  font: bold italic 26px/28px "Liberation Sans", sans-serif;
}
.ime-zh {
  color: #0a6fd6;
  font-size: 16px;
  font-weight: bold;
}
.ime-zh.punct {
  font-size: 14px;
}
```
